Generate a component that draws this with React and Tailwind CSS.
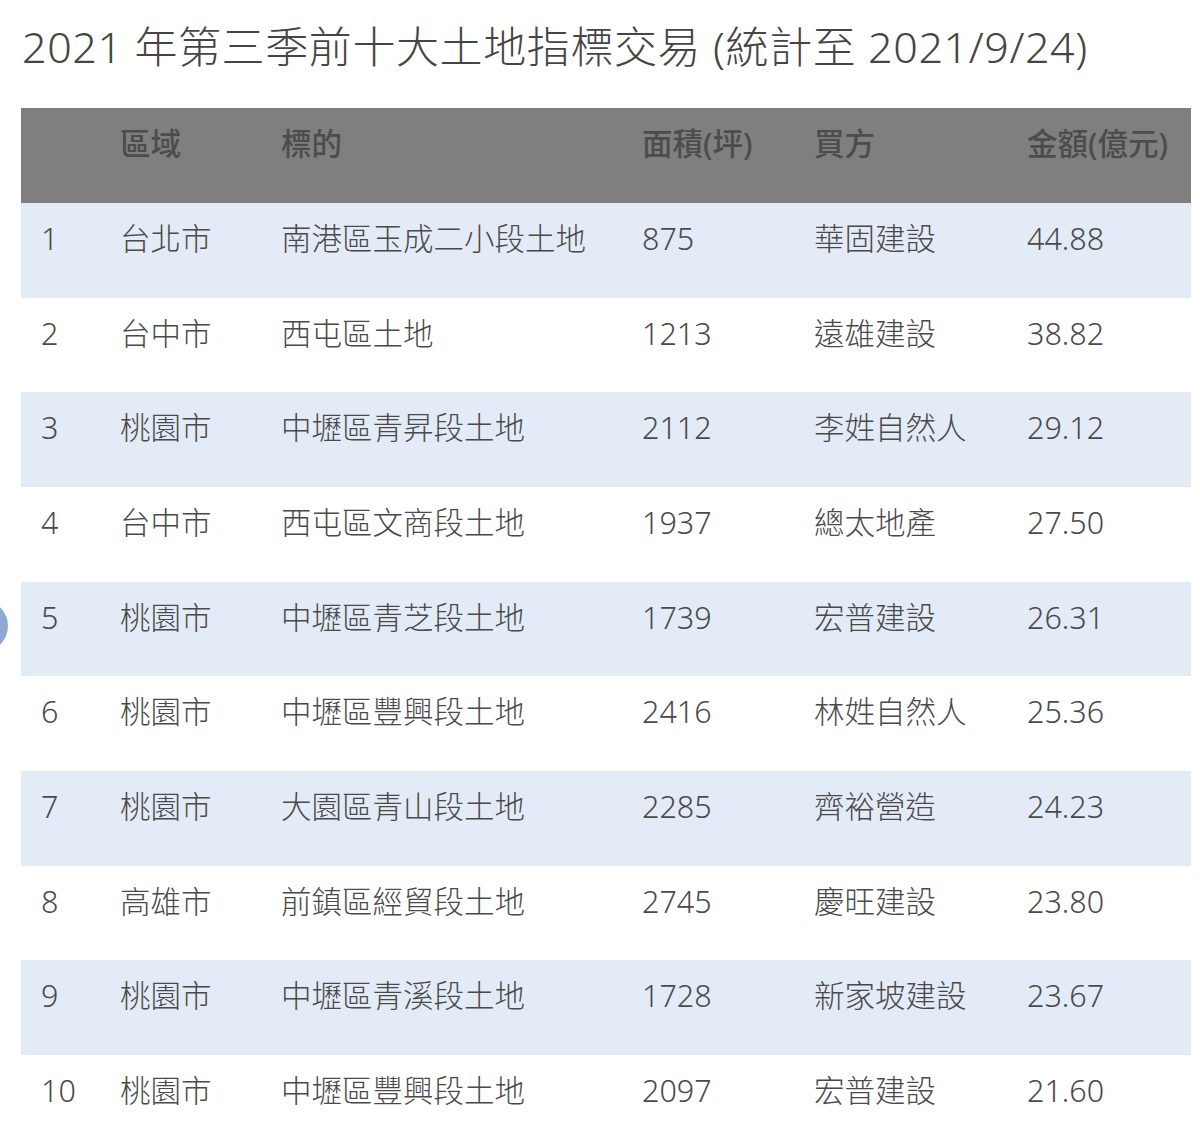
import React from 'react'

const rows = [
  ['1', '台北市', '南港區玉成二小段土地', '875', '華固建設', '44.88'],
  ['2', '台中市', '西屯區土地', '1213', '遠雄建設', '38.82'],
  ['3', '桃園市', '中壢區青昇段土地', '2112', '李姓自然人', '29.12'],
  ['4', '台中市', '西屯區文商段土地', '1937', '總太地產', '27.50'],
  ['5', '桃園市', '中壢區青芝段土地', '1739', '宏普建設', '26.31'],
  ['6', '桃園市', '中壢區豐興段土地', '2416', '林姓自然人', '25.36'],
  ['7', '桃園市', '大園區青山段土地', '2285', '齊裕營造', '24.23'],
  ['8', '高雄市', '前鎮區經貿段土地', '2745', '慶旺建設', '23.80'],
  ['9', '桃園市', '中壢區青溪段土地', '1728', '新家坡建設', '23.67'],
  ['10', '桃園市', '中壢區豐興段土地', '2097', '宏普建設', '21.60'],
]

// first column keeps 20px left padding, the others start at the text
const cols = 'grid grid-cols-[99px_161px_361px_172px_213px_164px]'

const App = () => {
  return (
    <div
      className="relative w-[1200px] h-[1137px] overflow-hidden bg-white text-[#4a4a4a]"
      style={{ fontFamily: '"Noto Sans", "Noto Sans CJK TC", sans-serif' }}
    >
      <div className="absolute left-[-44px] top-[600px] w-[52px] h-[52px] rounded-full bg-[#8fa8d3]" />
      <h1 className="pt-[25px] pl-[22px] text-[43px] leading-[44px] font-light tracking-[0.6px] text-[#454545]">
        2021 年第三季前十大土地指標交易 (統計至 2021/9/24)
      </h1>
      <div className="ml-[21px] mt-[39px] w-[1170px]">
        <div className={`${cols} h-[95px] bg-[#7f7f7f] text-[30.5px] leading-[30px] font-medium text-[#4c4c4c]`}>
          <div className="pl-5 pt-5"></div>
          <div className="pt-5">區域</div>
          <div className="pt-5">標的</div>
          <div className="pt-5">面積(坪)</div>
          <div className="pt-5">買方</div>
          <div className="pt-5">金額(億元)</div>
        </div>
        {rows.map((r, i) => (
          <div
            key={r[0]}
            className={`${cols} h-[94.67px] text-[30.5px] leading-[30px] font-light ${i % 2 === 0 ? 'bg-[#e3ebf6]' : 'bg-white'}`}
          >
            {r.map((c, j) => (
              <div key={j} className={`${j === 0 ? 'pl-5' : ''} pt-5 whitespace-nowrap`}>{c}</div>
            ))}
          </div>
        ))}
      </div>
    </div>
  )
}

export default App
